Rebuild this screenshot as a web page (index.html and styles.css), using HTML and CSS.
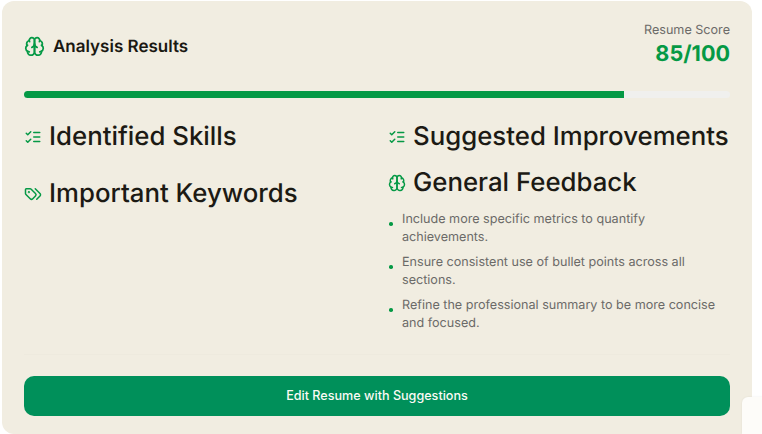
FILE: index.html
```html
<!DOCTYPE html>
<html lang="en">
<head>
    <meta charset="UTF-8">
    <meta name="viewport" content="width=device-width, initial-scale=1.0">
    <title>Analysis Results</title>
    <link rel="stylesheet" href="styles.css">
</head>
<body>

    <!-- Results Card -->
    <div class="card">
        <div class="card-header">
            <div class="card-title">
                <svg class="icon icon-title" viewBox="0 0 24 24"><path d="M12 5a3 3 0 1 0-5.997.125 4 4 0 0 0-2.526 5.77 4 4 0 0 0 .556 6.588A4 4 0 1 0 12 18Z"/><path d="M12 5a3 3 0 1 1 5.997.125 4 4 0 0 1 2.526 5.77 4 4 0 0 1-.556 6.588A4 4 0 1 1 12 18Z"/><path d="M15 13a4.5 4.5 0 0 1-3-4 4.5 4.5 0 0 1-3 4"/><path d="M17.599 6.5a3 3 0 0 0 .399-1.375"/><path d="M6.003 5.125A3 3 0 0 0 6.401 6.5"/><path d="M3.477 10.896a4 4 0 0 1 .585-.396"/><path d="M19.938 10.5a4 4 0 0 1 .585.396"/><path d="M6 18a4 4 0 0 1-1.967-.516"/><path d="M19.967 17.484A4 4 0 0 1 18 18"/></svg>
                <h2>Analysis Results</h2>
            </div>
            <div class="score">
                <div class="score-label">Resume Score</div>
                <div class="score-value">85/100</div>
            </div>
        </div>

        <div class="progress"><div class="progress-fill" style="width: 85%"></div></div>

        <div class="columns">
            <div class="column">
                <section class="block">
                    <div class="block-title">
                        <svg class="icon" viewBox="0 0 24 24"><path d="m3 17 2 2 4-4"/><path d="m3 7 2 2 4-4"/><path d="M13 6h8"/><path d="M13 12h8"/><path d="M13 18h8"/></svg>
                        <h3>Identified Skills</h3>
                    </div>
                </section>
                <section class="block">
                    <div class="block-title">
                        <svg class="icon" viewBox="0 0 24 24"><path d="m15 5 6.3 6.3a2.4 2.4 0 0 1 0 3.4L17 19"/><path d="M9.586 5.586A2 2 0 0 0 8.172 5H3a1 1 0 0 0-1 1v5.172a2 2 0 0 0 .586 1.414L8.29 18.29a2.426 2.426 0 0 0 3.42 0l3.58-3.58a2.426 2.426 0 0 0 0-3.42z"/><circle cx="6.5" cy="9.5" r=".5"/></svg>
                        <h3>Important Keywords</h3>
                    </div>
                </section>
            </div>

            <div class="column column-right">
                <section class="block">
                    <div class="block-title">
                        <svg class="icon" viewBox="0 0 24 24"><path d="m3 17 2 2 4-4"/><path d="m3 7 2 2 4-4"/><path d="M13 6h8"/><path d="M13 12h8"/><path d="M13 18h8"/></svg>
                        <h3>Suggested Improvements</h3>
                    </div>
                </section>
                <section class="block">
                    <div class="block-title">
                        <svg class="icon" viewBox="0 0 24 24"><path d="M12 5a3 3 0 1 0-5.997.125 4 4 0 0 0-2.526 5.77 4 4 0 0 0 .556 6.588A4 4 0 1 0 12 18Z"/><path d="M12 5a3 3 0 1 1 5.997.125 4 4 0 0 1 2.526 5.77 4 4 0 0 1-.556 6.588A4 4 0 1 1 12 18Z"/><path d="M15 13a4.5 4.5 0 0 1-3-4 4.5 4.5 0 0 1-3 4"/><path d="M17.599 6.5a3 3 0 0 0 .399-1.375"/><path d="M6.003 5.125A3 3 0 0 0 6.401 6.5"/><path d="M3.477 10.896a4 4 0 0 1 .585-.396"/><path d="M19.938 10.5a4 4 0 0 1 .585.396"/><path d="M6 18a4 4 0 0 1-1.967-.516"/><path d="M19.967 17.484A4 4 0 0 1 18 18"/></svg>
                        <h3>General Feedback</h3>
                    </div>
                    <ul class="feedback">
                        <li>Include more specific metrics to quantify achievements.</li>
                        <li>Ensure consistent use of bullet points across all sections.</li>
                        <li>Refine the professional summary to be more concise and focused.</li>
                    </ul>
                </section>
            </div>
        </div>

        <div class="card-footer">
            <button class="edit-btn">Edit Resume with Suggestions</button>
        </div>
    </div>

    <!-- Corner widget -->
    <div class="corner-widget"></div>

</body>
</html>
```

FILE: styles.css
```css
/* General Styles */
body {
    font-family: Inter, "Liberation Sans", sans-serif;
    text-rendering: geometricPrecision;
    margin: 0;
    padding: 1px 10px 0 2px;
    height: 433px;
    overflow: hidden;
    background-color: #fff;
}

h2, h3 {
    margin: 0;
}

/* Card */
.card {
    height: 433px;
    box-sizing: border-box;
    padding: 21px 22px 18px 22px;
    background-color: #f1ede1;
    border-radius: 12px;
    display: flex;
    flex-direction: column;
}

.card-header {
    display: flex;
    justify-content: space-between;
    align-items: center;
    height: 46px;
    flex: none;
}

.card-title {
    display: flex;
    align-items: center;
    gap: 8px;
    padding-top: 3px;
}

.card-title h2 {
    font-size: 17px;
    font-weight: 600;
    color: #1a1812;
}

.score {
    text-align: right;
    padding-top: 1px;
}

.score-label {
    font-size: 12.6px;
    line-height: 18px;
    color: #6b6a68;
}

.score-value {
    font-size: 21.6px;
    line-height: 29px;
    font-weight: 700;
    color: #059945;
}

/* Icons */
.icon {
    width: 18px;
    height: 18px;
    flex: none;
    fill: none;
    stroke: #059945;
    stroke-width: 2;
    stroke-linecap: round;
    stroke-linejoin: round;
}

.icon-title {
    width: 21px;
    height: 21px;
}

/* Progress Bar */
.progress {
    flex: none;
    margin-top: 23px;
    height: 7px;
    border-radius: 4px;
    background-color: #f0f0ee;
    overflow: hidden;
}

.progress-fill {
    height: 100%;
    background-color: #059945;
}

/* Columns */
.columns {
    display: grid;
    grid-template-columns: 342px 342px;
    gap: 22px;
    margin-top: 21px;
    flex: 1;
    min-height: 0;
}

.block {
    margin-bottom: 21px;
}

.column-right .block {
    margin-bottom: 10px;
}

.column-right .block:last-child {
    margin-bottom: 0;
}

.block-title {
    display: flex;
    align-items: center;
    gap: 7px;
}

.block-title h3 {
    font-size: 25.8px;
    line-height: 36px;
    font-weight: 450;
    white-space: nowrap;
    color: #1c1a14;
}

/* Feedback List */
.feedback {
    list-style: none;
    margin: 10px 0 0 0;
    padding: 0;
}

.feedback li {
    position: relative;
    padding-left: 14px;
    margin-bottom: 7px;
    font-size: 12.6px;
    line-height: 18px;
    color: #6b6a68;
}

.feedback li::before {
    content: "";
    position: absolute;
    left: 1px;
    top: 11px;
    width: 3.5px;
    height: 3.5px;
    border-radius: 50%;
    background-color: #059945;
}

/* Footer */
.card-footer {
    flex: none;
    border-top: 1px solid #eeeade;
    padding-top: 21px;
}

.edit-btn {
    display: block;
    width: 100%;
    height: 40px;
    padding: 0 0 2px;
    border: none;
    border-radius: 10px;
    background-color: #00905a;
    color: #fbfaf5;
    font-family: inherit;
    font-size: 12.6px;
    font-weight: 500;
    cursor: pointer;
}

/* Corner widget */
.corner-widget {
    position: fixed;
    left: 742px;
    top: 397px;
    width: 30px;
    height: 50px;
    background-color: #fdfcf9;
    border-radius: 6px;
    box-shadow: 0 0 2px rgba(0, 0, 0, 0.08);
}
```
